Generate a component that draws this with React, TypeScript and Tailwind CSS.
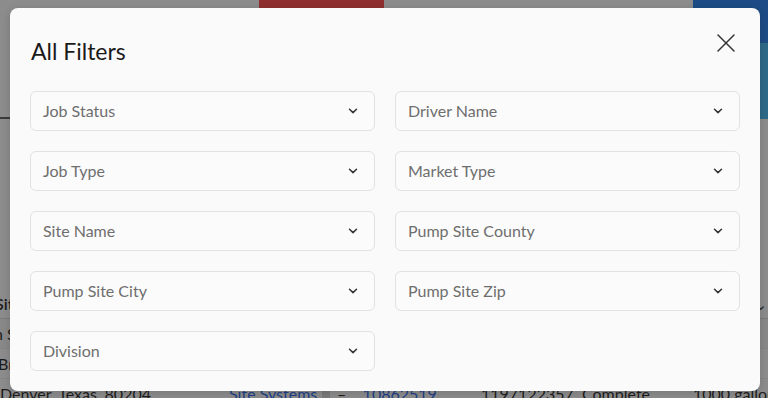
import React from 'react';

const filters = [
  'Job Status',
  'Driver Name',
  'Job Type',
  'Market Type',
  'Site Name',
  'Pump Site County',
  'Pump Site City',
  'Pump Site Zip',
  'Division',
];

const Chevron = () => (
  <svg width="10" height="6" viewBox="0 0 10 6" fill="none" className="shrink-0">
    <polyline points="1.5,1.2 5,4.6 8.5,1.2" stroke="#333" strokeWidth="1.5" strokeLinecap="round" strokeLinejoin="round" />
  </svg>
);

const FilterSelect: React.FC<{ label: string }> = ({ label }) => (
  <button className="h-10 w-full flex items-center justify-between rounded-md border border-[#e2e2e2] bg-[#fbfbfb] pl-3 pr-4 text-left">
    <span className="text-[16px] text-[#6e6e6e]">{label}</span>
    <Chevron />
  </button>
);

export default function App() {
  return (
    <div className="relative w-[768px] h-[398px] overflow-hidden bg-[#8c8c8c] font-['Lato',sans-serif]">
      {/* Dimmed page behind the modal */}
      <div className="flex h-[8px]">
        <div className="w-[259px]" />
        <div className="w-[125px] bg-[#8f2f2f]" />
        <div className="flex-1" />
      </div>
      <div className="absolute right-0 top-0 w-[75px] h-[43px] bg-[#1d4b85]" />
      <div className="absolute right-0 top-[43px] w-[75px] h-[76px] bg-[#2d6a88]" />
      <div className="mt-[109px] h-[2px] bg-[#3a3a3a]" />
      <div className="mt-[170px] flex flex-col text-[16px] text-[#1c1c1c]">
        <div className="h-[30px] flex items-center justify-between border-b border-[#7a7a7a]">
          <span className="-ml-[5px] font-semibold">Sit</span>
          <span className="pr-[1px] text-[#333]">⌄</span>
        </div>
        <div className="h-[30px] flex items-center border-b border-[#848484] bg-[#888]">
          <span className="-ml-[6px]">n S</span>
        </div>
        <div className="h-[30px] flex items-center border-b border-[#848484]">
          <span className="-ml-[2px]">Bro</span>
        </div>
        <div className="h-[30px] flex items-center whitespace-nowrap">
          <span className="w-[229px] shrink-0">Denver, Texas, 80204</span>
          <span className="w-[93px] shrink-0 text-[#1c3f86] underline">Site Systems</span>
          <span className="w-[159px] shrink-0 flex items-center">
            <span className="w-[8px] h-[20px] bg-[#7a7a7a]" />
            <span className="ml-[7px]">–</span>
            <span className="ml-[5px] text-[#1c3f86] underline">...10862519</span>
          </span>
          <span className="w-[101px] shrink-0">1197122357</span>
          <span className="w-[111px] shrink-0">Complete</span>
          <span className="shrink-0">1000 gallon</span>
        </div>
      </div>

      {/* Modal */}
      <div className="absolute left-[10px] top-[8px] w-[750px] h-[383px] rounded-lg bg-[#fafafa] shadow-[0_2px_8px_rgba(0,0,0,0.15)] px-5">
        <div className="flex items-start justify-between pt-[29px] h-[83px]">
          <h2 className="text-[23px] leading-[28px] text-[#1a1a1a] pl-[1px]">All Filters</h2>
          <svg width="18" height="18" viewBox="0 0 18 18" className="mt-[-3px] mr-[5px]">
            <path d="M1 1 L17 17 M17 1 L1 17" stroke="#333" strokeWidth="1.5" strokeLinecap="round" />
          </svg>
        </div>
        <div className="grid grid-cols-2 gap-x-5 gap-y-5">
          {filters.map((f) => (
            <FilterSelect key={f} label={f} />
          ))}
        </div>
      </div>
    </div>
  );
}
